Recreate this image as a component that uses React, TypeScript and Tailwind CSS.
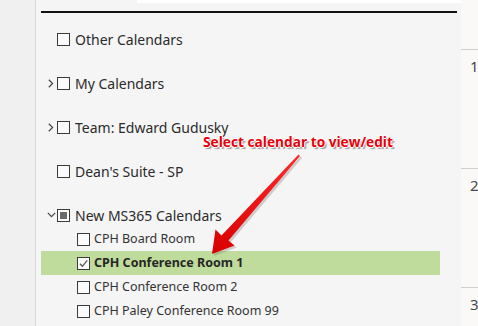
import type { ReactNode } from 'react';

const font = { fontFamily: '"Noto Sans", "Open Sans", Arial, sans-serif' };

function Box({ state = 'off' }: { state?: 'off' | 'on' | 'mixed' }) {
  return (
    <span className="flex h-[13px] w-[13px] shrink-0 items-center justify-center border border-[#3b3b3b] bg-[#fbfbfb]">
      {state === 'mixed' && <span className="h-[7px] w-[7px] bg-[#6b6b6b]" />}
      {state === 'on' && (
        <svg width="11" height="11" viewBox="0 0 11 11" fill="none">
          <path d="M2 5.8 L4.4 8.3 L9.2 2.4" stroke="#555" strokeWidth="1.3" />
        </svg>
      )}
    </span>
  );
}

function Chevron({ open }: { open?: boolean }) {
  return (
    <span className="flex w-[10px] justify-center">
      {open ? (
        <svg width="9" height="6" viewBox="0 0 9 6" fill="none">
          <path d="M0.8 0.8 L4.5 4.6 L8.2 0.8" stroke="#444" strokeWidth="1.2" />
        </svg>
      ) : (
        <svg width="6" height="9" viewBox="0 0 6 9" fill="none">
          <path d="M0.8 0.8 L4.6 4.5 L0.8 8.2" stroke="#444" strokeWidth="1.2" />
        </svg>
      )}
    </span>
  );
}

function Group({ label, chevron, open, state, className = 'h-[44px]' }: { label: string; chevron?: boolean; open?: boolean; state?: 'off' | 'mixed'; className?: string }) {
  return (
    <div className={`flex items-center pl-[10px] ${className}`}>
      {chevron ? <Chevron open={open} /> : <span className="w-[10px]" />}
      <span className="ml-[1px]">
        <Box state={state} />
      </span>
      <span className="ml-[5px] text-[14px] text-[#2b2b2b]">{label}</span>
    </div>
  );
}

function Room({ label, checked }: { label: string; checked?: boolean }) {
  return (
    <div className={`ml-[5px] flex h-[24px] w-[399px] items-center pl-[36px] ${checked ? 'bg-[#c0dc9c]' : ''}`}>
      <Box state={checked ? 'on' : 'off'} />
      <span className={`ml-[4px] text-[12.5px] ${checked ? 'font-bold text-[#262626]' : 'text-[#333]'}`}>{label}</span>
    </div>
  );
}

function DayCell({ n, children }: { n: string; children?: ReactNode }) {
  return (
    <div className="h-[119px] border-t border-[#d2d0ce] pl-[9px] pt-[9px] text-[15px] leading-none text-[#4a4a4a]">
      {n}
      {children}
    </div>
  );
}

export default function App() {
  return (
    <div className="relative flex h-[326px] w-[478px] overflow-hidden bg-[#f5f5f5]" style={font}>
      <div className="w-[36px] shrink-0 border-r border-[#d9d9d9] bg-[#f0f0f0]" />

      <div className="w-[425px] shrink-0 bg-[#f5f5f5]">
        <div className="h-[17px]">
          <div className="ml-[101px] h-[3px] bg-white" />
          <div className="ml-[5px] mr-[4px] mt-[8px] h-[2px] bg-[#111]" />
        </div>
        <Group label="Other Calendars" />
        <Group label="My Calendars" chevron />
        <Group label="Team: Edward Gudusky" chevron />
        <Group label="Dean's Suite - SP" />
        <Group label="New MS365 Calendars" chevron open state="mixed" className="mt-[10px] h-[24px]" />
        <Room label="CPH Board Room" />
        <Room label="CPH Conference Room 1" checked />
        <Room label="CPH Conference Room 2" />
        <Room label="CPH Paley Conference Room 99" />
      </div>

      <div className="flex-1 bg-[#faf9f8] pt-[49px]">
        <DayCell n="1" />
        <DayCell n="2" />
        <DayCell n="3" />
      </div>

      <span
        className="absolute left-[203px] top-[132px] text-[13.7px] font-bold text-[#e8000b] [text-shadow:1px_0_0_#fff,-1px_0_0_#fff,0_1px_0_#fff,0_-1px_0_#fff,2px_2px_1px_#9a9a9a]"
        style={{ fontFamily: '"Open Sans", "Noto Sans", sans-serif' }}
      >
        Select calendar to view/edit
      </span>

      <svg className="pointer-events-none absolute left-0 top-0" width="478" height="326" viewBox="0 0 478 326">
        <defs>
          <linearGradient id="ar" x1="299" y1="155" x2="212" y2="254" gradientUnits="userSpaceOnUse">
            <stop offset="0" stopColor="#ff2a2a" />
            <stop offset="1" stopColor="#d80000" />
          </linearGradient>
        </defs>
        <g transform="translate(2 2)" opacity="0.25">
          <path d="M298.5 154.5 L300 156 L228.5 240.5 L234.5 245.5 L212 254 L215.5 229.5 L221.5 235.5 Z" fill="#555" />
        </g>
        <path d="M298.5 154.5 L300 156 L228.5 240.5 L234.5 245.5 L212 254 L215.5 229.5 L221.5 235.5 Z" fill="url(#ar)" />
      </svg>
    </div>
  );
}
